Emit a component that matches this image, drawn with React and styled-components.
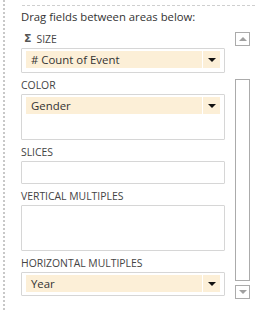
import React from 'react';
import styled, { createGlobalStyle } from 'styled-components';

const GlobalStyle = createGlobalStyle`
  html, body {
    margin: 0;
    padding: 0;
    background: #fff;
  }
  body {
    font-family: 'Open Sans', 'Noto Sans', 'DejaVu Sans', sans-serif;
    font-size: 12px;
    color: #444;
  }
`;

const Pane = styled.div`
  width: 252px;
  height: 310px;
  box-sizing: border-box;
  margin-left: 3px;
  border-left: 2px dotted #c8c8c8;
  padding-left: 16px;
  overflow: hidden;
`;

const TopRule = styled.div`
  margin-top: 5px;
  margin-left: 1px;
  border-top: 1px dashed #cfcfcf;
`;

const Hint = styled.div`
  margin-top: 4px;
  height: 14px;
  line-height: 14px;
  font-size: 11.3px;
  color: #333;
`;

const Body = styled.div`
  display: flex;
  gap: 10px;
`;

const Areas = styled.div`
  width: 204px;
  display: flex;
  flex-direction: column;
`;

const Label = styled.div`
  height: 14px;
  line-height: 14px;
  margin-top: ${(p) => p.$top || 5}px;
  padding-left: ${(p) => (p.$sigma ? 3 : 0)}px;
  font-size: 10.4px;
  color: #444;
  display: flex;
  align-items: center;
  gap: 5px;
`;

const Sigma = styled.span`
  font-family: 'DejaVu Sans', sans-serif;
  font-size: 11px;
  font-weight: bold;
  color: #555;
`;

const Well = styled.div`
  margin-top: 2px;
  height: ${(p) => p.$h}px;
  box-sizing: border-box;
  border: 1px solid #d6d6d6;
  border-radius: 1px;
  padding: 2px 4px;
`;

const Item = styled.div`
  height: 17px;
  display: flex;
  gap: 1px;
`;

const ItemName = styled.div`
  flex: 1;
  background: #fcefd7;
  color: #333;
  font-size: 11.4px;
  line-height: 17px;
  padding-left: 5px;
  white-space: nowrap;
`;

const ItemArrow = styled.div`
  width: 17px;
  background: #fcefd7;
  display: flex;
  align-items: center;
  justify-content: center;
`;

const Caret = styled.span`
  width: 0;
  height: 0;
  border-left: 4px solid transparent;
  border-right: 4px solid transparent;
  border-top: 4px solid #111;
`;

const Scroll = styled.div`
  width: 15px;
  margin-top: 8px;
  display: flex;
  flex-direction: column;
`;

const ScrollBtn = styled.div`
  height: 14px;
  box-sizing: border-box;
  border: 1px solid #ababab;
  display: flex;
  align-items: center;
  justify-content: center;
`;

const Tri = styled.span`
  width: 0;
  height: 0;
  border-left: 4px solid transparent;
  border-right: 4px solid transparent;
  ${(p) =>
    p.$down
      ? 'border-top: 4px solid #a0a0a0;'
      : 'border-bottom: 4px solid #a0a0a0;'}
`;

const Track = styled.div`
  margin: 33px 0 4px;
  height: 202px;
  box-sizing: border-box;
  border: 1px solid #ababab;
`;

function Field({ children }) {
  return (
    <Item>
      <ItemName>{children}</ItemName>
      <ItemArrow>
        <Caret />
      </ItemArrow>
    </Item>
  );
}

export default function App() {
  return (
    <>
      <GlobalStyle />
      <Pane>
        <TopRule />
        <Hint>Drag fields between areas below:</Hint>
        <Body>
          <Areas>
            <Label $top={8} $sigma>
              <Sigma>Σ</Sigma>
              SIZE
            </Label>
            <Well $h={25}>
              <Field># Count of Event</Field>
            </Well>
            <Label>COLOR</Label>
            <Well $h={46}>
              <Field>Gender</Field>
            </Well>
            <Label>SLICES</Label>
            <Well $h={23} />
            <Label>VERTICAL MULTIPLES</Label>
            <Well $h={46} />
            <Label>HORIZONTAL MULTIPLES</Label>
            <Well $h={24}>
              <Field>Year</Field>
            </Well>
          </Areas>
          <Scroll>
            <ScrollBtn>
              <Tri />
            </ScrollBtn>
            <Track />
            <ScrollBtn>
              <Tri $down />
            </ScrollBtn>
          </Scroll>
        </Body>
      </Pane>
    </>
  );
}
